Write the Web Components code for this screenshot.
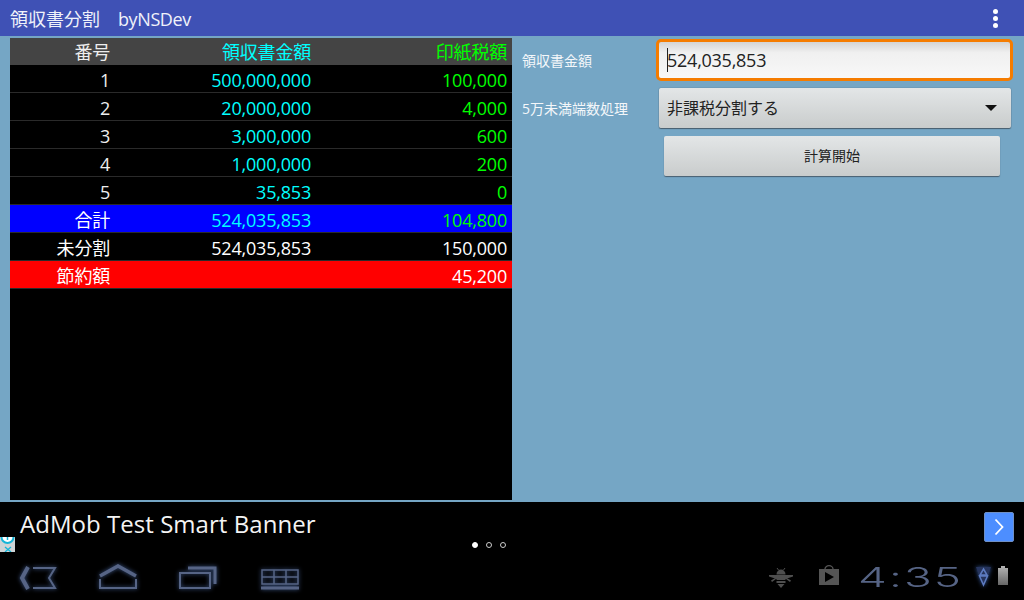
<!DOCTYPE html>
<html>
<head>
<meta charset="utf-8">
<style>
    html, body {
        margin: 0;
        height: 100%;
    }

    body {
        width: 1024px;
        height: 600px;
        overflow: hidden;
        display: flex;
        flex-direction: column;
        background: #75a6c5;
        font-family: "Open Sans", "Noto Sans CJK JP", sans-serif;
    }
</style>
</head>
<body>
<app-bar>領収書分割　<span style="letter-spacing:-.4px">byNSDev</span></app-bar>
<main-view></main-view>
<ad-banner>AdMob Test Smart Banner</ad-banner>
<nav-bar></nav-bar>

<script>
class AppBar extends HTMLElement {
    constructor () {
        super ();
        this.attachShadow ({mode: "open"}).innerHTML = `
<style>
    :host {
        display: flex;
        flex: none;
        height: 36px;
        align-items: center;
        justify-content: space-between;
        padding: 0 26px 0 10px;
        background: #3f51b5;
        color: #f0f2fa;
        font-size: 18px;
    }

    .more {
        display: flex;
        flex-direction: column;
        gap: 2px;
    }

    .more i {
        width: 5px;
        height: 5px;
        border-radius: 50%;
        background: #fff;
    }
</style>
<span><slot></slot></span>
<span class="more"><i></i><i></i><i></i></span>`;
    }
}

class TableRow extends HTMLElement {
    constructor () {
        super ();
        const cells = ["a", "b", "c"].map ((name) => `<span class="${name}">${this.getAttribute (name) || ""}</span>`).join ("");
        this.attachShadow ({mode: "open"}).innerHTML = `
<style>
    :host {
        display: grid;
        grid-template-columns: 100px 201px 196px;
        height: 23px;
        line-height: 23px;
        padding: 4px 5px 0 0;
        border-bottom: 1px solid #2a2a2a;
        text-align: right;
        font-size: 18px;
        letter-spacing: -0.2px;
        color: #eee;
        background: #000;
    }

    .b { color: #00ffff; }
    .c { color: #00ff00; }

    :host([kind="head"]) { background: #444; border-bottom: 0; height: 24px; padding-top: 3px; }
    :host([kind="total"]) { background: #0000ff; color: #fff; }
    :host([kind="plain"]) { color: #fff; }
    :host([kind="plain"]) .b, :host([kind="plain"]) .c { color: #fff; }
    :host([kind="save"]) { background: #ff0000; color: #fff; }
    :host([kind="save"]) .c { color: #fff; }
</style>
${cells}`;
    }
}

class ReceiptTable extends HTMLElement {
    constructor () {
        super ();
        this.attachShadow ({mode: "open"}).innerHTML = `
<style>
    :host {
        display: block;
        flex: none;
        width: 502px;
        background: #000;
    }
</style>
<slot></slot>`;
    }
}

class FormRow extends HTMLElement {
    constructor () {
        super ();
        this.attachShadow ({mode: "open"}).innerHTML = `
<style>
    :host {
        display: flex;
        align-items: center;
    }

    label {
        flex: none;
        width: 134px;
        font-size: 14px;
        color: #f4f7fa;
    }
</style>
<label>${this.getAttribute ("label") || ""}</label>
<slot></slot>`;
    }
}

class TextField extends HTMLElement {
    constructor () {
        super ();
        this.attachShadow ({mode: "open"}).innerHTML = `
<style>
    :host {
        display: flex;
        align-items: center;
        box-sizing: border-box;
        width: 357px;
        height: 42px;
        padding-left: 8px;
        border: 3px solid #f57c00;
        border-radius: 5px;
        background: linear-gradient(#d4d4d4, #f0f0f0 30%, #f8f8f8);
        color: #222;
        font-size: 18px;
        letter-spacing: -0.25px;
    }

    .caret {
        width: 1px;
        height: 24px;
        margin-right: -1px;
        background: #222;
    }
</style>
<span class="caret"></span><slot></slot>`;
    }
}

class SelectBox extends HTMLElement {
    constructor () {
        super ();
        this.attachShadow ({mode: "open"}).innerHTML = `
<style>
    :host {
        display: flex;
        align-items: center;
        justify-content: space-between;
        box-sizing: border-box;
        width: 352px;
        height: 40px;
        margin-left: 3px;
        padding: 0 14px 2px 8px;
        border-radius: 2px;
        background: linear-gradient(#e3e6e7, #c9cccc);
        box-shadow: 0 0 1px #3c4a55, 0 1px 1px #4a5f6e;
        color: #222;
        font-size: 16px;
    }

    .arrow {
        width: 0;
        height: 0;
        margin-top: 2px;
        border-left: 6px solid transparent;
        border-right: 6px solid transparent;
        border-top: 6px solid #111;
    }
</style>
<slot></slot><span class="arrow"></span>`;
    }
}

class PushButton extends HTMLElement {
    constructor () {
        super ();
        this.attachShadow ({mode: "open"}).innerHTML = `
<style>
    :host {
        display: flex;
        align-items: center;
        justify-content: center;
        box-sizing: border-box;
        width: 336px;
        height: 40px;
        margin-left: 142px;
        padding-bottom: 2px;
        border-radius: 2px;
        background: linear-gradient(#e3e6e7, #c9cccc);
        box-shadow: 0 1px 1px #4a5f6e;
        color: #222;
        font-size: 14px;
    }
</style>
<slot></slot>`;
    }
}

class MainView extends HTMLElement {
    constructor () {
        super ();
        this.attachShadow ({mode: "open"}).innerHTML = `
<style>
    :host {
        display: flex;
        flex: none;
        height: 462px;
        gap: 10px;
        padding: 2px 0 2px 10px;
    }

    .form {
        display: flex;
        flex-direction: column;
        gap: 7px;
        padding-top: 1px;
    }

    .form form-row:nth-child(2) {
        margin-bottom: 1px;
    }
</style>
<receipt-table>
    <table-row kind="head" a="番号" b="領収書金額" c="印紙税額"></table-row>
    <table-row a="1" b="500,000,000" c="100,000"></table-row>
    <table-row a="2" b="20,000,000" c="4,000"></table-row>
    <table-row a="3" b="3,000,000" c="600"></table-row>
    <table-row a="4" b="1,000,000" c="200"></table-row>
    <table-row a="5" b="35,853" c="0"></table-row>
    <table-row kind="total" a="合計" b="524,035,853" c="104,800"></table-row>
    <table-row kind="plain" a="未分割" b="524,035,853" c="150,000"></table-row>
    <table-row kind="save" a="節約額" c="45,200"></table-row>
</receipt-table>
<div class="form">
    <form-row label="領収書金額"><text-field>524,035,853</text-field></form-row>
    <form-row label="5万未満端数処理"><select-box>非課税分割する</select-box></form-row>
    <push-button>計算開始</push-button>
</div>`;
    }
}

class AdBanner extends HTMLElement {
    constructor () {
        super ();
        this.attachShadow ({mode: "open"}).innerHTML = `
<style>
    :host {
        display: flex;
        flex: none;
        position: relative;
        height: 50px;
        box-sizing: border-box;
        justify-content: space-between;
        padding: 10px 10px 0 20px;
        background: #000;
        color: #f4f4f4;
        font-size: 24px;
        line-height: 24px;
        letter-spacing: 0.04px;
    }

    .next {
        display: flex;
        align-items: center;
        justify-content: center;
        width: 30px;
        height: 30px;
        box-sizing: border-box;
        border: 1px solid #6f8fc4;
        border-radius: 2px;
        background: #4d8eff;
    }

    .choice {
        position: absolute;
        left: 0;
        bottom: 0;
        display: block;
    }

    .dots {
        position: absolute;
        left: 472px;
        top: 40px;
        display: flex;
        gap: 8px;
    }

    .dots i {
        box-sizing: border-box;
        width: 6px;
        height: 6px;
        border-radius: 50%;
        border: 1px solid #ccc;
    }

    .dots i:first-child {
        background: #fff;
        border-color: #fff;
    }
</style>
<span><slot></slot></span>
<span class="next">
    <svg width="10" height="18" viewBox="0 0 10 18" fill="none" stroke="#fff" stroke-width="1.800"><path d="M1.500 1.500L8.500 9 1.500 16.500"/></svg>
</span>
<svg class="choice" width="15" height="15" viewBox="0 0 15 15">
    <rect width="15" height="15" fill="#cfd4d6"/>
    <path d="M1.500 0a6 6 0 0 0 12 0" fill="#fff" stroke="#16b5d8" stroke-width="2"/>
    <path d="M7.500 0v3" stroke="#16b5d8" stroke-width="1.500"/>
    <path d="M5 10l6 5M11 10l-6 5" stroke="#16b5d8" stroke-width="1.300" fill="none"/>
</svg>
<span class="dots"><i></i><i></i><i></i></span>`;
    }
}

class NavBar extends HTMLElement {
    constructor () {
        super ();
        this.attachShadow ({mode: "open"}).innerHTML = `
<style>
    :host {
        display: flex;
        flex: 1;
        align-items: center;
        justify-content: space-between;
        background: #000;
        padding: 2px 16px 0 19px;
    }

    .keys, .status {
        display: flex;
        align-items: center;
    }

    .keys {
        gap: 42px;
    }

    .keys svg {
        display: block;
        filter: drop-shadow(0 0 2px #3d5686);
    }

    .clock {
        display: inline-block;
        width: 99px;
        margin: 0 19px 0 19px;
        color: #566485;
        font-family: "Inter", "Liberation Sans", sans-serif;
        font-weight: 300;
        font-size: 27px;
        line-height: 27px;
        letter-spacing: 1.2px;
        white-space: nowrap;
        transform: scaleX(1.7);
        transform-origin: left center;
    }
</style>
<div class="keys">
    <svg width="38" height="26" viewBox="0 0 38 26" fill="none" stroke="#566485">
        <path d="M9 3L3 14 9 25" stroke-width="4"/>
        <path d="M14 4H36L30 14 36 24H14" stroke-width="2"/>
    </svg>
    <svg width="38" height="26" viewBox="0 0 38 26" fill="none" stroke="#566485">
        <path d="M1 12L19 2 37 12" stroke-width="3.500"/>
        <path d="M1 15V24H37V15" stroke-width="2"/>
    </svg>
    <svg width="38" height="26" viewBox="0 0 38 26" fill="none" stroke="#566485">
        <rect x="1" y="9" width="30" height="15" stroke-width="2"/>
        <path d="M9 4H36V20" stroke-width="3"/>
    </svg>
    <svg width="38" height="26" viewBox="0 0 38 26" fill="none" stroke="#566485" style="margin-left:2px">
        <path d="M1 6H37V20H1zM1 13H37M13 6V20M25 6V20" stroke-width="1.500"/>
        <path d="M0 24H38" stroke-width="3"/>
    </svg>
</div>
<div class="status">
    <svg width="24" height="20" viewBox="0 0 24 20" fill="#4e4e4e" style="margin-top:2px">
        <path d="M8 0L9.500 2M16 0L14.500 2" stroke="#4e4e4e" stroke-width="1"/>
        <path d="M7.500 6.500a4.500 5 0 0 1 9 0z"/>
        <path d="M0 7H24V8.500L16.500 11H7.500L0 8.500z"/>
        <path d="M7.500 10h9v2h-9zM7.500 13h9v2h-9zM8.500 16h7l-3.500 4z"/>
        <path d="M2 12.500L7 9.500V11L3 14zM22 12.500L17 9.500V11L21 14z"/>
    </svg>
    <svg width="20" height="20" viewBox="0 0 20 20" style="margin:0 0 4px 26px">
        <path d="M6 5V4a4 3.300 0 0 1 8 0v1" fill="none" stroke="#555" stroke-width="1.300"/>
        <path d="M0 4H20V20H0z" fill="#555"/>
        <path d="M6 7L15 12 6 17z" fill="#000"/>
    </svg>
    <span class="clock">4:35</span>
    <svg width="15" height="20" viewBox="0 0 15 20" style="filter:drop-shadow(0 0 2px #33579c)">
        <path d="M0 0H15L7.500 20z" fill="#26345c"/>
        <path d="M7.500 2L11 8H4zM3.500 9H11.500L7.500 18z" fill="none" stroke="#5d7bc0" stroke-width="1.500"/>
    </svg>
    <svg width="10" height="19" viewBox="0 0 10 19" style="margin:0 0 3px 7px">
        <defs><linearGradient id="bat" x1="0" y1="0" x2="0" y2="1"><stop offset="0" stop-color="#b5b5b5"/><stop offset="1" stop-color="#666"/></linearGradient></defs>
        <path d="M3 0H7V2H10V19H0V2H3z" fill="url(#bat)"/>
    </svg>
</div>`;
    }
}

customElements.define ("app-bar", AppBar);
customElements.define ("table-row", TableRow);
customElements.define ("receipt-table", ReceiptTable);
customElements.define ("form-row", FormRow);
customElements.define ("text-field", TextField);
customElements.define ("select-box", SelectBox);
customElements.define ("push-button", PushButton);
customElements.define ("main-view", MainView);
customElements.define ("ad-banner", AdBanner);
customElements.define ("nav-bar", NavBar);
</script>
</body>
</html>
